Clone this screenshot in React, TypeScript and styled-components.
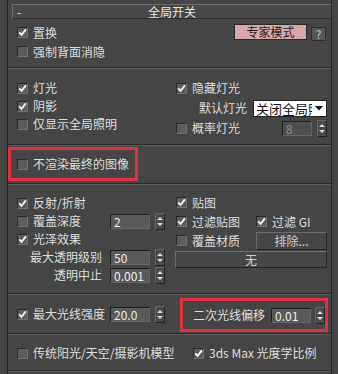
import styled, { createGlobalStyle } from "styled-components";

const GlobalStyle = createGlobalStyle`
  html, body {
    margin: 0;
    background: #454545;
  }
  body {
    font-family: "Noto Sans CJK SC", "Noto Sans", sans-serif;
    font-size: 12px;
    color: #dedede;
  }
`;

const Frame = styled.div`
  margin-left: 7px;
  width: 325px;
  min-height: 100vh;
  box-sizing: border-box;
  padding-top: 4px;
  border-left: 1px solid #232323;
  border-right: 1px solid #262626;
`;

const TitleBar = styled.div`
  margin-left: 4px;
  height: 15px;
  box-sizing: border-box;
  border-top: 1px solid #6e6e6e;
  border-left: 1px solid #6e6e6e;
  border-bottom: 1px solid #2c2c2c;
  background: #484848;
  display: grid;
  grid-template-columns: 20px 1fr 20px;
  align-items: center;
  line-height: 13px;
`;

const Minus = styled.span`
  padding-left: 4px;
  color: #e6e6e6;
`;

const Title = styled.span`
  text-align: center;
  color: #e6e6e6;
`;

const Section = styled.div<{ $pt?: number; $pb: number }>`
  padding: ${(p) => p.$pt ?? 0}px 0 ${(p) => p.$pb}px 9px;
  border-bottom: 1px solid #282828;
  box-shadow: 0 1px 0 #5e5e5e;
  margin-bottom: 1px;
`;

const Columns = styled.div`
  display: grid;
  grid-template-columns: 159px 1fr;
`;

const Column = styled.div<{ $pt: number; $rowH: number; $pr?: number }>`
  display: flex;
  flex-direction: column;
  padding-top: ${(p) => p.$pt}px;
  padding-right: ${(p) => p.$pr ?? 0}px;
  & > * {
    height: ${(p) => p.$rowH}px;
  }
`;

const Row = styled.div<{ $indent?: number }>`
  display: flex;
  align-items: center;
  white-space: nowrap;
  padding-left: ${(p) => p.$indent ?? 0}px;
`;

const Cell = styled.div<{ $w: number; $right?: boolean }>`
  width: ${(p) => p.$w}px;
  flex-shrink: 0;
  display: flex;
  align-items: center;
  justify-content: ${(p) => (p.$right ? "flex-end" : "flex-start")};
  padding-right: ${(p) => (p.$right ? 8 : 0)}px;
  box-sizing: border-box;
`;

const Box = styled.span`
  width: 11px;
  height: 11px;
  box-sizing: border-box;
  background: #5c5c5c;
  border: 1px solid;
  border-color: #2a2a2a #707070 #707070 #2a2a2a;
  display: flex;
  align-items: center;
  justify-content: center;
  flex-shrink: 0;
  margin-right: 5px;
`;

const Text = styled.span<{ $dim?: boolean }>`
  line-height: 14px;
  color: ${(p) => (p.$dim ? "#8a8a8a" : "#dedede")};
`;

const Check = ({ on, label }: { on?: boolean; label: string }) => (
  <Row>
    <Box>
      {on && (
        <svg width="9" height="9" viewBox="0 0 9 9">
          <path d="M1.2 4.3 L3.6 6.9 L7.9 1.4" stroke="#f4f4f4" strokeWidth="1.9" fill="none" />
        </svg>
      )}
    </Box>
    <Text>{label}</Text>
  </Row>
);

const SpinBox = styled.div<{ $w: number; $dim?: boolean }>`
  width: ${(p) => p.$w}px;
  height: 15px;
  box-sizing: border-box;
  background: ${(p) => (p.$dim ? "#4f4f4f" : "#5a5a5a")};
  border: 1px solid;
  border-color: #1c1c1c #666 #666 #1c1c1c;
  padding-left: 3px;
  line-height: 13px;
  color: ${(p) => (p.$dim ? "#8c8c8c" : "#ececec")};
`;

const Arrows = styled.span`
  width: 10px;
  height: 17px;
  box-sizing: border-box;
  background: #4a4a4a;
  border: 1px solid;
  border-color: #666 #222 #222 #666;
  display: flex;
  align-items: center;
  justify-content: center;
`;

const SpinGroup = styled.div<{ $gap?: number; $auto?: boolean }>`
  display: flex;
  align-items: center;
  gap: ${(p) => p.$gap ?? 5}px;
  margin-left: ${(p) => (p.$auto ? "auto" : "0")};
`;

const Spinner = ({ value, w = 40, dim, gap, auto }: { value: string; w?: number; dim?: boolean; gap?: number; auto?: boolean }) => (
  <SpinGroup $gap={gap} $auto={auto}>
    <SpinBox $w={w} $dim={dim}>{value}</SpinBox>
    <Arrows>
      <svg width="6" height="11" viewBox="0 0 6 11">
        <path d="M0 4 L3 1 L6 4 Z M0 7 L3 10 L6 7 Z" fill="#dcdcdc" />
      </svg>
    </Arrows>
  </SpinGroup>
);

const ExpertButton = styled.div`
  width: 73px;
  height: 16px;
  box-sizing: border-box;
  background: #d8a8a8;
  border: 1px solid #2a2a2a;
  color: #1e1e1e;
  text-align: center;
  line-height: 14px;
`;

const HelpButton = styled.div`
  width: 15px;
  height: 14px;
  margin-top: 3px;
  box-sizing: border-box;
  background: #565656;
  border: 1px solid #2e2e2e;
  color: #cfcfcf;
  text-align: center;
  font-size: 11px;
  line-height: 12px;
`;

const ButtonRow = styled.div`
  display: flex;
  justify-content: flex-end;
  align-items: flex-start;
  gap: 4px;
  padding-right: 5px;
`;

const Dropdown = styled.div`
  width: 74px;
  height: 17px;
  box-sizing: border-box;
  margin-left: 6px;
  background: #fff;
  border: 1px solid #222;
  display: flex;
  align-items: center;
  color: #111;
  font-size: 13px;
  overflow: hidden;
`;

const DropText = styled.span`
  flex: 1;
  overflow: hidden;
  padding-left: 2px;
  line-height: 15px;
`;

const DropArrow = styled.span`
  width: 14px;
  display: flex;
  justify-content: center;
  background: #fff;
`;

const FlatButton = styled.div<{ $w: number; $h: number; $ml?: number }>`
  width: ${(p) => p.$w}px;
  height: ${(p) => p.$h}px;
  margin-left: ${(p) => p.$ml ?? 0}px;
  box-sizing: border-box;
  background: #464646;
  border: 1px solid;
  border-color: #6a6a6a #242424 #242424 #6a6a6a;
  color: #d0d0d0;
  text-align: center;
  line-height: ${(p) => p.$h - 2}px;
`;

const ButtonCell = styled.div`
  display: flex;
  align-items: center;
`;

const Highlight = styled.div<{ $w: number; $ml?: number; $pl?: number; $end?: boolean }>`
  width: ${(p) => p.$w}px;
  height: 34px;
  margin-left: ${(p) => p.$ml ?? 0}px;
  box-sizing: border-box;
  border: 3px solid #e3313b;
  display: flex;
  align-items: center;
  justify-content: ${(p) => (p.$end ? "flex-end" : "flex-start")};
  padding-left: ${(p) => p.$pl ?? 0}px;
  gap: 6px;
  white-space: nowrap;
`;

const Wide = styled.div`
  display: grid;
  grid-template-columns: 176px 1fr;
  & > * {
    height: 18px;
  }
`;

export default function App() {
  return (
    <>
      <GlobalStyle />
      <Frame>
        <TitleBar>
          <Minus>-</Minus>
          <Title>全局开关</Title>
          <span />
        </TitleBar>

        <Section $pb={6}>
          <Columns>
            <Column $pt={4} $rowH={19}>
              <Check on label="置换" />
              <Check label="强制背面消隐" />
            </Column>
            <Column $pt={5} $rowH={16}>
              <ButtonRow>
                <ExpertButton>专家模式</ExpertButton>
                <HelpButton>?</HelpButton>
              </ButtonRow>
            </Column>
          </Columns>
        </Section>

        <Section $pb={6}>
          <Columns>
            <Column $pt={10} $rowH={18}>
              <Check on label="灯光" />
              <Check on label="阴影" />
              <Check label="仅显示全局照明" />
            </Column>
            <Column $pt={9} $rowH={20} $pr={6}>
              <Check on label="隐藏灯光" />
              <Row $indent={23}>
                <Text>默认灯光</Text>
                <Dropdown>
                  <DropText>关闭全局照</DropText>
                  <DropArrow>
                    <svg width="8" height="5" viewBox="0 0 8 5">
                      <path d="M0 0 L8 0 L4 4.5 Z" fill="#111" />
                    </svg>
                  </DropArrow>
                </Dropdown>
              </Row>
              <Row>
                <Check label="概率灯光" />
                <Spinner value="8" w={30} dim auto />
              </Row>
            </Column>
          </Columns>
        </Section>

        <Section $pt={1} $pb={2} style={{ paddingLeft: 0 }}>
          <Highlight $w={130} $pl={6}>
            <Check label="不渲染最终的图像" />
          </Highlight>
        </Section>

        <Section $pb={9}>
          <Columns>
            <Column $pt={9} $rowH={18}>
              <Check on label="反射/折射" />
              <Row>
                <Cell $w={93}>
                  <Check label="覆盖深度" />
                </Cell>
                <Spinner value="2" />
              </Row>
              <Check on label="光泽效果" />
              <Row>
                <Cell $w={93} $right>
                  <Text>最大透明级别</Text>
                </Cell>
                <Spinner value="50" />
              </Row>
              <Row>
                <Cell $w={93} $right>
                  <Text>透明中止</Text>
                </Cell>
                <Spinner value="0.001" />
              </Row>
            </Column>
            <Column $pt={8} $rowH={19} $pr={6}>
              <Check on label="贴图" />
              <Row>
                <Cell $w={80}>
                  <Check on label="过滤贴图" />
                </Cell>
                <Check on label="过滤 GI" />
              </Row>
              <Row>
                <Cell $w={80}>
                  <Check label="覆盖材质" />
                </Cell>
                <FlatButton $w={71} $h={18}>排除...</FlatButton>
              </Row>
              <ButtonCell>
                <FlatButton $w={152} $h={17} $ml={-1}>无</FlatButton>
              </ButtonCell>
            </Column>
          </Columns>
        </Section>

        <Section $pt={0} $pb={1}>
          <Columns>
            <Column $pt={10} $rowH={18}>
              <Row>
                <Cell $w={93}>
                  <Check on label="最大光线强度" />
                </Cell>
                <Spinner value="20.0" />
              </Row>
            </Column>
            <Column $pt={3} $rowH={34}>
              <Highlight $w={148} $ml={4} $end>
                <Text>二次光线偏移</Text>
                <Spinner value="0.01" gap={4} />
              </Highlight>
            </Column>
          </Columns>
        </Section>

        <Section $pt={9} $pb={8}>
          <Wide>
            <Check label="传统阳光/天空/摄影机模型" />
            <Check on label="3ds Max 光度学比例" />
          </Wide>
        </Section>
      </Frame>
    </>
  );
}
